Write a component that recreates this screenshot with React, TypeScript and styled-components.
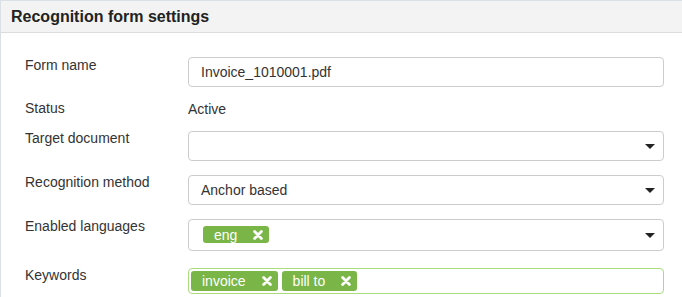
import React from "react";
import styled, { createGlobalStyle } from "styled-components";

const Global = createGlobalStyle`
  html, body { margin: 0; padding: 0; background: #fff; }
  body { font-family: "Liberation Sans", Arial, sans-serif; color: #333; }
`;

const Panel = styled.section`
  border-top: 1px solid #dbe0e6;
  border-left: 1px solid #dbe0e6;
  min-height: 296px;
  background: #fff;
`;

const Header = styled.header`
  height: 31px;
  background: #f3f3f3;
  border-bottom: 1px solid #dcdcdc;
  display: flex;
  align-items: center;
  padding-left: 10px;
`;

const Title = styled.h2`
  margin: 0;
  font-size: 16px;
  font-weight: bold;
  color: #222;
  line-height: 18px;
`;

const Body = styled.div`
  padding: 24px 18px 0 24px;
  display: flex;
  flex-direction: column;
`;

const Row = styled.div<{ $gap?: number }>`
  display: flex;
  align-items: flex-start;
  margin-bottom: ${(p) => (p.$gap ?? 14)}px;
`;

const Label = styled.label<{ $center?: boolean }>`
  width: 163px;
  flex: none;
  font-size: 14px;
  line-height: 14px;
  padding-top: ${(p) => (p.$center ? 1 : 0)}px;
  color: #333;
`;

const Value = styled.div`
  font-size: 14px;
  line-height: 16px;
  color: #333;
`;

const Field = styled.div<{ $h?: number; $focus?: boolean; $padLeft?: number }>`
  box-sizing: border-box;
  width: 476px;
  height: ${(p) => p.$h ?? 30}px;
  border: 1px solid ${(p) => (p.$focus ? "#a9dc7c" : "#cccccc")};
  border-radius: 4px;
  background: #fff;
  display: flex;
  align-items: center;
  padding-left: ${(p) => p.$padLeft ?? 12}px;
  padding-right: 8px;
  position: relative;
  font-size: 14px;
  color: #333;
`;

const FieldText = styled.span`
  flex: 1;
  line-height: 16px;
`;

const Tags = styled.div<{ $gap?: number; $top?: number }>`
  flex: 1;
  display: flex;
  align-self: flex-start;
  margin-top: ${(p) => p.$top ?? 0}px;
  gap: ${(p) => p.$gap ?? 4}px;
`;

const Tag = styled.span<{ $h?: number }>`
  display: inline-flex;
  align-items: center;
  height: ${(p) => p.$h ?? 20}px;
  background: #7ab547;
  color: #fff;
  border-radius: 3px;
  font-size: 14px;
  padding: 0 6px 0 11px;
`;

const TagText = styled.span`
  line-height: 16px;
  margin-right: 16px;
`;

const Caret = styled.span`
  width: 0;
  height: 0;
  border-left: 5px solid transparent;
  border-right: 5px solid transparent;
  border-top: 5px solid #222;
  margin-left: auto;
`;

const Cross = () => (
  <svg width="10" height="10" viewBox="0 0 10 10">
    <path d="M1.6 1.6 L8.4 8.4 M8.4 1.6 L1.6 8.4" stroke="#fff" strokeWidth="2.8" strokeLinecap="round" />
  </svg>
);

export default function App() {
  return (
    <>
      <Global />
      <Panel>
        <Header>
          <Title>Recognition form settings</Title>
        </Header>
        <Body>
          <Row>
            <Label $center>Form name</Label>
            <Field>
              <FieldText>Invoice_1010001.pdf</FieldText>
            </Field>
          </Row>
          <Row>
            <Label>Status</Label>
            <Value>Active</Value>
          </Row>
          <Row>
            <Label>Target document</Label>
            <Field>
              <FieldText />
              <Caret />
            </Field>
          </Row>
          <Row>
            <Label>Recognition method</Label>
            <Field>
              <FieldText>Anchor based</FieldText>
              <Caret />
            </Field>
          </Row>
          <Row $gap={17}>
            <Label>Enabled languages</Label>
            <Field $h={32} $padLeft={14}>
              <Tags $top={6}>
                <Tag $h={17}>
                  <TagText>eng</TagText>
                  <Cross />
                </Tag>
              </Tags>
              <Caret />
            </Field>
          </Row>
          <Row>
            <Label>Keywords</Label>
            <Field $h={26} $focus $padLeft={2}>
              <Tags $top={2}>
                <Tag>
                  <TagText>invoice</TagText>
                  <Cross />
                </Tag>
                <Tag>
                  <TagText>bill to</TagText>
                  <Cross />
                </Tag>
              </Tags>
            </Field>
          </Row>
        </Body>
      </Panel>
    </>
  );
}
